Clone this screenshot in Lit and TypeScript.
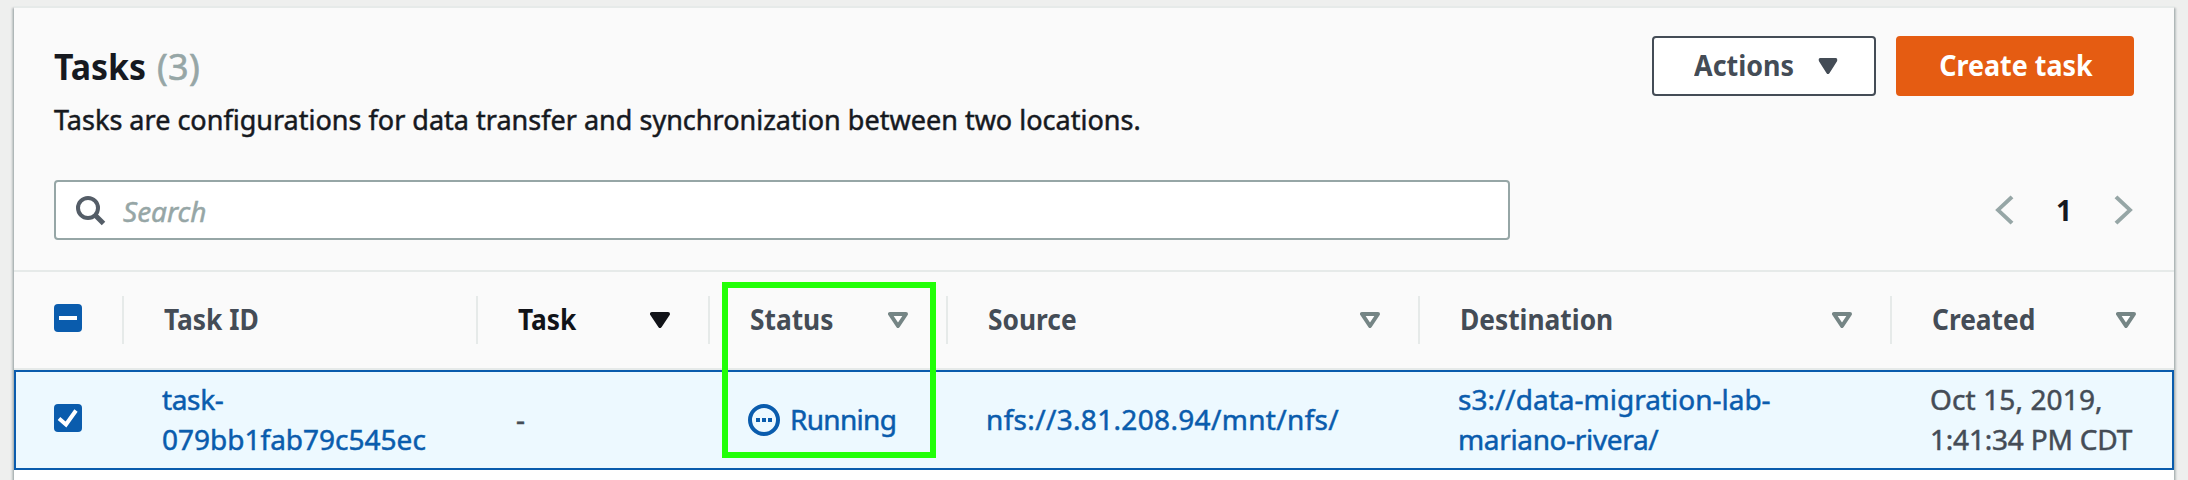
import { LitElement, html, svg, css } from 'lit';
import { customElement, property } from 'lit/decorators.js';
import { classMap } from 'lit/directives/class-map.js';

@customElement('sort-caret')
class SortCaret extends LitElement {
  @property({ type: Boolean }) filled = false;

  static styles = css`
    :host { display: block; width: 20px; height: 16px; }
    svg { display: block; }
    path { fill: none; stroke: currentColor; stroke-width: 4; stroke-linejoin: round; }
    .inner { fill: #fff; }
    .filled { fill: currentColor; }
  `;

  render() {
    return html`<svg width="20" height="16" viewBox="0 0 20 16">
      <path class=${this.filled ? 'filled' : 'inner'} d="M2 2H18L10 14Z" />
    </svg>`;
  }
}

@customElement('check-box')
class CheckBox extends LitElement {
  @property() mark = 'checked';

  static styles = css`
    :host { display: block; width: 28px; height: 28px; }
    svg { display: block; }
  `;

  render() {
    return html`<svg width="28" height="28" viewBox="0 0 28 28">
      <rect width="28" height="28" rx="4" fill="#0a5cad" />
      ${this.mark === 'checked'
        ? svg`<path d="M5 14.5L12 20.5L22 6.5" fill="none" stroke="#fff" stroke-width="4" />`
        : svg`<rect x="5" y="12" width="18" height="4" fill="#fff" />`}
    </svg>`;
  }
}

const columns = [
  { label: 'Task ID' },
  { label: 'Task', caret: 'filled' },
  { label: 'Status', caret: 'open' },
  { label: 'Source', caret: 'open' },
  { label: 'Destination', caret: 'open' },
  { label: 'Created', caret: 'open' },
];

@customElement('app-root')
class AppRoot extends LitElement {
  static styles = css`
    * { box-sizing: border-box; }
    :host {
      display: block;
      height: 480px;
      padding: 6px 14px 0;
      overflow: hidden;
      background: #eeefee;
      font: 28px/40px "Noto Sans", "Open Sans", sans-serif;
      color: #16191f;
    }
    .card {
      position: relative;
      height: 520px;
      border-top: 2px solid #e6eae9;
      background: #fff;
      box-shadow: 0 2px 2px rgba(0, 28, 36, 0.3), 2px 2px 2px rgba(0, 28, 36, 0.2),
        -2px 2px 2px rgba(0, 28, 36, 0.2);
    }
    .head { height: 264px; padding: 28px 40px 0; background: #fafafa; border-bottom: 2px solid #e6eae9; }
    .top { display: flex; justify-content: space-between; height: 144px; }
    h1 { display: flex; gap: 10px; margin: 6px 0 0; font-size: 36px; line-height: 50px; }
    h1 .count { font-weight: 400; color: #96a6a6; letter-spacing: 0.3px; -webkit-text-stroke: 0.6px; }
    .narrow { display: block; transform: scaleX(0.94); transform-origin: left; }
    h1 .narrow { width: 93px; white-space: nowrap; }
    p { margin: 7px 0 0; transform: scaleX(0.965); transform-origin: left; white-space: nowrap; -webkit-text-stroke: 0.5px; }
    .buttons { display: flex; gap: 20px; }
    button {
      display: flex;
      align-items: center;
      justify-content: center;
      height: 60px;
      padding: 0 0 2px;
      border: 2px solid #444c56;
      border-radius: 4px;
      background: #fff;
      color: #444c56;
      font: inherit;
      font-weight: 700;
    }
    button .label { display: block; transform: scaleX(0.96); }
    .actions { width: 224px; gap: 22px; padding-left: 2px; }
    .actions sort-caret { margin-top: 2px; transform: scaleX(0.95); }
    .create { width: 238px; border-color: #e55c12; background: #e55c12; color: #fff; padding-left: 1px; }
    .tools { display: flex; justify-content: space-between; align-items: center; }
    .search {
      display: flex;
      align-items: center;
      gap: 15px;
      width: 1456px;
      height: 60px;
      padding-left: 20px;
      border: 2px solid #96a6a6;
      border-radius: 4px;
      background: #fff;
      font-style: italic;
      color: #96a6a6;
    }
    .search span { padding-top: 2px; -webkit-text-stroke: 0.5px; }
    .pages { display: flex; align-items: center; margin-right: 1px; font-weight: 700; }
    .pages span { width: 100px; text-align: center; }
    .row { display: grid; grid-template-columns: 110px 354px 232px 238px 472px 472px 1fr; }
    .titles { height: 98px; background: #fafafa; border-bottom: 2px solid #e6eae9; color: #444c56; font-weight: 700; }
    .title {
      display: flex;
      align-items: center;
      justify-content: space-between;
      height: 48px;
      margin: 24px 0 0 -2px;
      padding: 0 40px 2px;
      border-left: 2px solid #e6eae9;
    }
    .title:last-child { padding-right: 38px; }
    .title sort-caret { color: #758585; margin-top: 2px; }
    .title.sorted, .title.sorted sort-caret { color: #111318; }
    .box { padding: 32px 0 0 40px; }
    .selected {
      height: 100px;
      grid-template-columns: 108px 354px 232px 238px 472px 472px 1fr;
      border: 2px solid #0a5cad;
      background: #edf9ff;
      color: #0a5cad;
      -webkit-text-stroke: 0.5px;
    }
    .selected .box { padding-left: 38px; }
    .cell { display: flex; flex-direction: column; justify-content: center; padding: 0 0 2px 38px; white-space: nowrap; }
    .plain { color: #444c56; }
    .running { flex-direction: row; justify-content: flex-start; align-items: center; gap: 10px; letter-spacing: -0.7px; }
    .running svg { margin-top: 2px; }
    .tight { letter-spacing: -0.35px; }
    .time { letter-spacing: -0.2px; }
    .date { letter-spacing: 0.12px; }
    .wide { letter-spacing: 0.33px; }
    .highlight { position: absolute; left: 708px; top: 274px; width: 214px; height: 176px; border: 6px solid #22ff08; }
  `;

  render() {
    return html`
      <section class="card">
        <div class="head">
          <div class="top">
            <div>
              <h1><span class="narrow">Tasks</span><span class="count">(3)</span></h1>
              <p>Tasks are configurations for data transfer and synchronization between two locations.</p>
            </div>
            <div class="buttons">
              <button class="actions"><span class="label">Actions</span><sort-caret filled></sort-caret></button>
              <button class="create"><span class="label">Create task</span></button>
            </div>
          </div>
          <div class="tools">
            <div class="search">
              <svg width="32" height="32" viewBox="0 0 32 32" fill="none" stroke="#545d67">
                <circle cx="12" cy="14" r="10" stroke-width="4" />
                <path d="M19 21L27.5 29.5" stroke-width="5" />
              </svg>
              <span>Search</span>
            </div>
            <div class="pages">
              <svg width="19" height="32" viewBox="0 0 19 32" fill="none" stroke="#96a6a6" stroke-width="4">
                <path d="M17 2L3 16L17 30" transform="translate(0 1) scale(1 .94)" />
              </svg>
              <span>1</span>
              <svg width="19" height="32" viewBox="0 0 19 32" fill="none" stroke="#96a6a6" stroke-width="4">
                <path d="M2 2L16 16L2 30" transform="translate(0 1) scale(1 .94)" />
              </svg>
            </div>
          </div>
        </div>
        <div class="row titles">
          <div class="box"><check-box mark="mixed"></check-box></div>
          ${columns.map(
            (c) => html`<div class=${classMap({ title: true, sorted: c.caret === 'filled' })}>
              <span class="narrow">${c.label}</span>
              ${c.caret ? html`<sort-caret ?filled=${c.caret === 'filled'}></sort-caret>` : null}
            </div>`
          )}
        </div>
        <div class="row selected">
          <div class="box"><check-box></check-box></div>
          <div class="cell"><span class="tight">task-</span><span>079bb1fab79c545ec</span></div>
          <div class="cell plain">-</div>
          <div class="cell running">
            <svg width="32" height="32" viewBox="0 0 32 32">
              <circle cx="16" cy="16" r="14" fill="none" stroke="#0a5cad" stroke-width="4" />
              <path d="M8 14h4v4H8zM14 14h4v4h-4zM20 14h4v4h-4z" fill="#0a5cad" />
            </svg>
            <span>Running</span>
          </div>
          <div class="cell wide">nfs://3.81.208.94/mnt/nfs/</div>
          <div class="cell"><span>s3://data-migration-lab-</span><span class="tight">mariano-rivera/</span></div>
          <div class="cell plain"><span class="date">Oct 15, 2019,</span><span class="time">1:41:34 PM CDT</span></div>
        </div>
        <div class="highlight"></div>
      </section>
    `;
  }
}
